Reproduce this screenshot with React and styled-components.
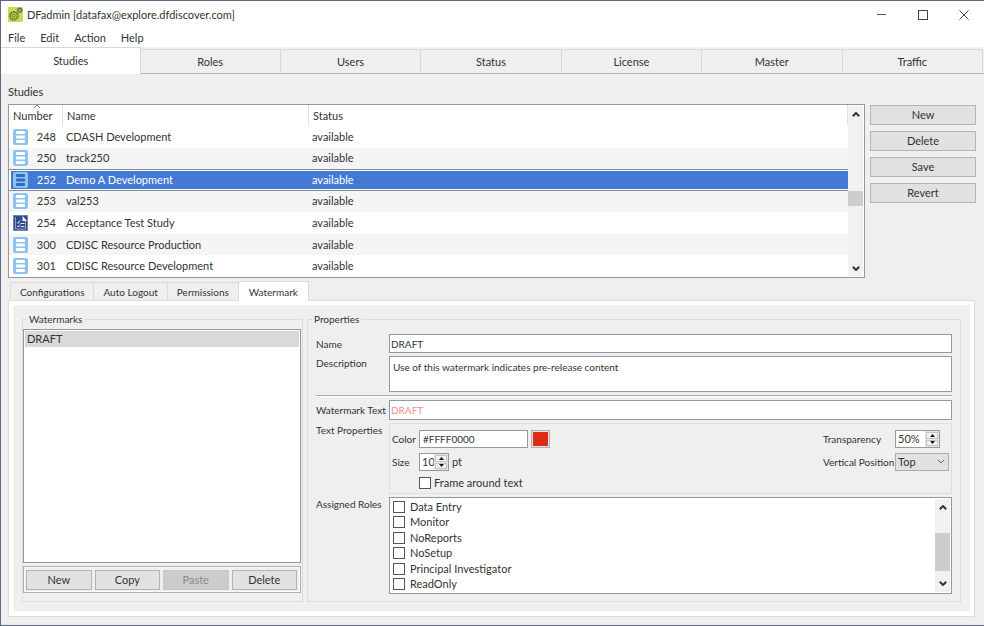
import React, { useState } from "react";

import styled, { createGlobalStyle, css } from "styled-components";

const GlobalStyle = createGlobalStyle`
  * {
    box-sizing: border-box;
  }

  body {
    margin: 0;
    background: #efefef;
  }

  body,
  button,
  input,
  textarea,
  select {
    font-family: Lato, "Open Sans", sans-serif;
    font-size: 11px;
    line-height: 14px;
    color: #333;
  }
`;

const Window = styled.div`
  min-height: 100vh;
  display: flex;
  flex-direction: column;
  border: solid #5c6782;
  border-width: 1px 0 1px 1px;
  background: #efefef;
`;

const TitleBar = styled.header`
  height: 27px;
  display: flex;
  align-items: center;
  padding-left: 7px;
  background: #fff;
`;

const Title = styled.h1`
  flex: 1;
  margin: 0 0 0 4px;
  font-size: 11px;
  font-weight: normal;
`;

const WindowButton = styled.button`
  width: 41px;
  height: 26px;
  padding: 0;
  display: flex;
  align-items: center;
  justify-content: center;
  border: none;
  background: none;
`;

const MenuBar = styled.nav`
  height: 19px;
  display: flex;
  align-items: center;
  gap: 15px;
  padding-left: 7px;
  background: #fff;
`;

const MenuItem = styled.button`
  padding: 0;
  border: none;
  background: none;
`;

const MainTabs = styled.div`
  height: 27px;
  display: flex;
  align-items: flex-end;
  padding: 0 1px;
  border-bottom: 1px solid #b4b4b4;
`;

const MainTab = styled.button`
  flex: 1;
  height: 24px;
  padding: 0;
  border: solid #d9d9d9;
  border-width: 1px 1px 0 0;
  background: #efefef;

  ${({ $active }) =>
    $active &&
    css`
      height: 27px;
      margin: 0 -1px -1px;
      z-index: 1;
      background: #fff;
    `}
`;

const StudiesTitle = styled.h2`
  margin: 11px 0 5px 7px;
  font-size: 11px;
  font-weight: normal;
`;

const StudiesArea = styled.div`
  display: flex;
  align-items: flex-start;
  gap: 5px;
  padding: 0 8px 0 7px;
`;

const TableFrame = styled.div`
  flex: 1;
  height: 174px;
  display: flex;
  border: 1px solid #94989f;
  background: #fff;
`;

const Table = styled.table`
  flex: 1;
  height: 172px;
  table-layout: fixed;
  border-spacing: 0;
`;

const HeadCell = styled.th`
  width: ${({ $width }) => $width};
  height: 21px;
  padding: 0 0 0 4px;
  border-right: 1px solid #e2e2e2;
  text-align: left;
  font-weight: normal;
`;

const SortHead = styled.span`
  position: relative;
  display: block;

  svg {
    position: absolute;
    top: -5px;
    left: 20px;
  }
`;

const Cell = styled.td`
  padding: 0 0 0 3px;
`;

const Row = styled.tr`
  background: ${({ $shaded }) => ($shaded ? "#f5f5f5" : "#fff")};

  ${({ $selected }) =>
    $selected &&
    css`
      background: #4379d3;
      color: #fff;

      ${Cell} {
        box-shadow: inset 0 1px #7f8b93, inset 0 -1px #7f8b93,
          inset 0 2px #fff, inset 0 -2px #fff;
      }

      ${Cell}:first-child {
        box-shadow: inset 0 1px #7f8b93, inset 0 -1px #7f8b93,
          inset 0 2px #fff, inset 0 -2px #fff, inset 2px 0 #fff;
      }
    `}
`;

const NumberCell = styled.div`
  display: flex;
  align-items: center;
  justify-content: space-between;
  padding: 0 7px 0 1px;
`;

const ScrollTrack = styled.div`
  width: 15px;
  display: flex;
  flex-direction: column;
  margin: 1px 1px 1px 0;
  background: #f1f1f1;
`;

const ScrollButton = styled.button`
  height: 16px;
  padding: 0;
  display: flex;
  align-items: center;
  justify-content: center;
  border: none;
  background: none;
`;

const ScrollSpace = styled.div`
  flex: ${({ $grow }) => $grow};
`;

const ScrollThumb = styled.div`
  flex: ${({ $grow }) => $grow};
  background: #cdcdcd;
`;

const PushButton = styled.button`
  height: 20px;
  flex: 1;
  padding: 0;
  border: 1px solid #b4b4b4;
  background: #e1e1e1;

  &:disabled {
    border-color: #c6c6c6;
    background: #cccccc;
    color: #8b8b8b;
  }
`;

const SideButtons = styled.div`
  width: 106px;
  display: grid;
  gap: 6px;
  padding-top: 1px;
`;

const SubTabs = styled.div`
  display: flex;
  align-items: flex-end;
  height: 22px;
  padding: 0 9px;
`;

const SubTab = styled.button`
  height: 18px;
  padding: 0 9px;
  border: solid #dadada;
  border-width: 1px 1px 0 0;
  background: #efefef;
  font-size: 10px;

  &:first-child {
    border-left-width: 1px;
  }

  ${({ $active }) =>
    $active &&
    css`
      height: 20px;
      margin-bottom: -1px;
      padding: 0 10px;
      z-index: 1;
      background: #fff;
    `}
`;

const Pane = styled.main`
  flex: 1;
  display: flex;
  margin: 0 9px 8px 7px;
  border: 1px solid #dcdcdc;
  background: #fff;
  padding: 4px 4px 5px;
`;

const PaneBody = styled.div`
  flex: 1;
  display: flex;
  gap: 4px;
  padding: 7px 9px 9px;
  background: #efefef;
`;

const Group = styled.fieldset`
  flex: ${({ $flex }) => $flex};
  min-width: 0;
  margin: 0;
  padding: 0;
  display: flex;
  flex-direction: column;
  border: 1px solid #dcdcdc;
`;

const Legend = styled.legend`
  margin-left: 4px;
  padding: 0 2px;
  font-size: 10px;
`;

const WatermarkList = styled.ul`
  flex: 1;
  margin: 3px 1px 3px 0;
  padding: 1px;
  border: 1px solid #94989f;
  background: #fff;
  list-style: none;

  li {
    height: 16px;
    padding: 1px 0 0 2px;
    background: #d9d9d9;
  }
`;

const ListButtons = styled.div`
  display: flex;
  gap: 3px;
  margin: 0 1px 8px 0;
  padding: 3px 3px 2px 2px;
  border: 1px solid #b0b0b0;
  box-shadow: inset 0 0 0 1px #fafafa;
`;

const Form = styled.div`
  flex: 1;
  display: grid;
  grid-template-columns: 73px 1fr;
  grid-template-rows: 19px 36px 2px 20px 71px 1fr;
  row-gap: 3px;
  padding: 8px 8px 7px;
`;

const FieldLabel = styled.label`
  white-space: nowrap;
  font-size: 10px;
  align-self: ${({ $center }) => ($center ? "center" : "start")};
`;

const Rule = styled.hr`
  grid-column: 1 / -1;
  width: 100%;
  margin: 0;
  border: solid;
  border-width: 1px 0;
  border-color: #a8a8a8 #fff #fff;
`;

const TextInput = styled.input`
  width: 100%;
  min-width: 0;
  padding: 0 1px;
  border: 1px solid #94989f;
  background: #fff;
  font-size: 10px;
  color: ${({ $color }) => $color};
`;

const TextArea = styled.textarea`
  padding: 3px;
  border: 1px solid #94989f;
  background: #fff;
  font-size: 10px;
  resize: none;
`;

const TextProps = styled.div`
  display: flex;
  justify-content: space-between;
  padding: 6px 2px;
  border: 1px solid #dedede;
`;

const PropColumn = styled.div`
  display: grid;
  grid-template-columns: ${({ $columns }) => $columns};
  grid-template-rows: 18px 18px 14px;
  row-gap: 5px;
  align-items: center;
`;

const Inline = styled.div`
  height: 100%;
  display: flex;
  align-items: center;
  gap: 3px;
`;

const ColorInput = styled(TextInput)`
  width: 109px;
  height: 18px;
  padding: 0 3px;
`;

const Swatch = styled.button`
  width: 19px;
  height: 18px;
  padding: 0;
  border: 1px solid #b0b0b0;
  background: #dd2c16;
  box-shadow: inset 0 0 0 1px #e6e6e6;
`;

const Spin = styled.div`
  width: ${({ $width }) => $width};
  height: 18px;
  display: flex;
  border: 1px solid #94989f;
  background: #fff;

  input {
    flex: 1;
    min-width: 0;
    padding: 0 0 0 2px;
    border: none;
    background: none;
  }
`;

const SpinButtons = styled.div`
  width: 14px;
  display: grid;
  gap: 1px;
  padding: 1px;
  background: #e6e6e6;
`;

const SpinButton = styled.button`
  padding: 0;
  display: flex;
  align-items: center;
  justify-content: center;
  border: 1px solid #c4c4c4;
  background: #f2f2f2;
`;

const SelectBox = styled.div`
  position: relative;

  select {
    display: block;
    width: 100%;
    height: 18px;
    padding: 0 2px;
    appearance: none;
    border: 1px solid #adadad;
    border-radius: 0;
    background: #e1e1e1;
  }

  svg {
    position: absolute;
    top: 6px;
    right: 4px;
    pointer-events: none;
  }
`;

const CheckBox = styled.input`
  width: 12px;
  height: 12px;
  margin: 0;
  appearance: none;
  border: 1px solid #555;
  background: #fff;

  &:checked {
    background: #555;
  }
`;

const CheckLabel = styled.label`
  display: flex;
  align-items: center;
  gap: ${({ $gap }) => $gap};
`;

const Roles = styled.div`
  display: flex;
  border: 1px solid #94989f;
  background: #fff;
`;

const RoleList = styled.div`
  flex: 1;
  display: flex;
  flex-direction: column;
  padding: 1px 3px;

  ${CheckLabel} {
    flex: 1;
  }
`;

const AppIcon = () => (
  <svg width="15" height="15" viewBox="0 0 15 15" fill="none">
    <rect width="15" height="15" rx="1" fill="#c8db50" />
    <circle cx="5.8" cy="8.8" r="4.2" stroke="#5b6840" strokeWidth="1.2" strokeDasharray="1.7 0.6" />
    <circle cx="5.8" cy="8.8" r="3.4" stroke="#5b6840" strokeWidth="0.7" />
    <circle cx="5.8" cy="8.8" r="1.5" stroke="#5b6840" strokeWidth="0.9" />
    <circle cx="11.6" cy="3.3" r="1.8" stroke="#5a6472" strokeWidth="1.3" />
    <circle cx="11.6" cy="3.3" r="2.7" stroke="#5a6472" strokeWidth="0.7" strokeDasharray="1.2 1" />
  </svg>
);

const DatabaseIcon = ({ selected }) => (
  <svg width="15" height="16" viewBox="0 0 15 16">
    <rect width="15" height="16" rx="2" fill="#8cc4ee" />
    {[2, 6.5, 11].map((y) => (
      <rect key={y} x="3" y={y} width="9" height="3" rx="0.8" fill={selected ? "#2f6bc8" : "#fff"} />
    ))}
  </svg>
);

const ReportIcon = () => (
  <svg width="15" height="16" viewBox="0 0 15 16" fill="none">
    <rect x="0.5" y="0.5" width="14" height="15" fill="#2c4a8c" stroke="#7286b4" />
    <path d="M2.500 2v12h10V6" stroke="#8fa1cb" />
    <path d="M9.500 1v5h4.500z" fill="#fff" />
    <path d="M4 7.500l1 1 2-3M4 11l1 1 2-2.500M7.500 8.500h4M7.500 11.500h4" stroke="#dfe6f5" />
  </svg>
);

const Chevron = ({ up, size = 8, color = "#333", width = 2 }) => (
  <svg width={size} height={size / 2 + 1} viewBox="0 0 8 5" fill="none">
    <path d={up ? "M0.800 4.200L4 1l3.200 3.200" : "M0.800 0.800L4 4l3.200-3.200"} stroke={color} strokeWidth={width} />
  </svg>
);

const Triangle = ({ up }) => (
  <svg width="5" height="3" viewBox="0 0 5 3">
    <path d={up ? "M0 3L2.500 0L5 3z" : "M0 0L2.500 3L5 0z"} fill="#111" />
  </svg>
);

const ScrollBar = ({ before, thumb, after }) => (
  <ScrollTrack>
    <ScrollButton aria-label="Scroll up">
      <Chevron up />
    </ScrollButton>
    <ScrollSpace $grow={before} />
    <ScrollThumb $grow={thumb} />
    <ScrollSpace $grow={after} />
    <ScrollButton aria-label="Scroll down">
      <Chevron />
    </ScrollButton>
  </ScrollTrack>
);

const SpinBox = ({ id, value, width }) => (
  <Spin $width={width}>
    <input id={id} defaultValue={value} />
    <SpinButtons>
      <SpinButton aria-label="Increase">
        <Triangle up />
      </SpinButton>
      <SpinButton aria-label="Decrease">
        <Triangle />
      </SpinButton>
    </SpinButtons>
  </Spin>
);

const mainTabs = ["Studies", "Roles", "Users", "Status", "License", "Master", "Traffic"];

const subTabs = ["Configurations", "Auto Logout", "Permissions", "Watermark"];

const studies = [
  { number: 248, name: "CDASH Development" },
  { number: 250, name: "track250" },
  { number: 252, name: "Demo A Development" },
  { number: 253, name: "val253" },
  { number: 254, name: "Acceptance Test Study", report: true },
  { number: 300, name: "CDISC Resource Production" },
  { number: 301, name: "CDISC Resource Development" },
];

const roles = [
  "Data Entry",
  "Monitor",
  "NoReports",
  "NoSetup",
  "Principal Investigator",
  "ReadOnly",
];

const App = () => {
  const [mainTab, setMainTab] = useState("Studies");
  const [subTab, setSubTab] = useState("Watermark");
  const [selected, setSelected] = useState(252);

  return (
    <Window>
      <GlobalStyle />
      <TitleBar>
        <AppIcon />
        <Title>DFadmin [datafax@explore.dfdiscover.com]</Title>
        <WindowButton aria-label="Minimize">
          <svg width="10" height="10" viewBox="0 0 10 10">
            <path d="M0 4.500h9" stroke="#555" />
          </svg>
        </WindowButton>
        <WindowButton aria-label="Maximize">
          <svg width="10" height="10" viewBox="0 0 10 10">
            <rect x="0.5" y="0.5" width="9" height="9" fill="none" stroke="#444" />
          </svg>
        </WindowButton>
        <WindowButton aria-label="Close">
          <svg width="10" height="10" viewBox="0 0 10 10">
            <path d="M0.500 0.500l9 9M9.500 0.500l-9 9" stroke="#444" />
          </svg>
        </WindowButton>
      </TitleBar>
      <MenuBar>
        <MenuItem>File</MenuItem>
        <MenuItem>Edit</MenuItem>
        <MenuItem>Action</MenuItem>
        <MenuItem>Help</MenuItem>
      </MenuBar>
      <MainTabs>
        {mainTabs.map((tab) => (
          <MainTab key={tab} $active={tab === mainTab} onClick={() => setMainTab(tab)}>
            {tab}
          </MainTab>
        ))}
      </MainTabs>

      <StudiesTitle>Studies</StudiesTitle>
      <StudiesArea>
        <TableFrame>
          <Table>
            <thead>
              <tr>
                <HeadCell $width="54px">
                  <SortHead>
                    Number
                    <Chevron up color="#777" width={1} />
                  </SortHead>
                </HeadCell>
                <HeadCell $width="246px">Name</HeadCell>
                <HeadCell>Status</HeadCell>
              </tr>
            </thead>
            <tbody>
              {studies.map(({ number, name, report }, index) => (
                <Row
                  key={number}
                  $shaded={index % 2 === 1}
                  $selected={number === selected}
                  onClick={() => setSelected(number)}
                >
                  <Cell>
                    <NumberCell>
                      {report ? <ReportIcon /> : <DatabaseIcon selected={number === selected} />}
                      {number}
                    </NumberCell>
                  </Cell>
                  <Cell>{name}</Cell>
                  <Cell>available</Cell>
                </Row>
              ))}
            </tbody>
          </Table>
          <ScrollBar before={69} thumb={16} after={54} />
        </TableFrame>
        <SideButtons>
          <PushButton>New</PushButton>
          <PushButton>Delete</PushButton>
          <PushButton>Save</PushButton>
          <PushButton>Revert</PushButton>
        </SideButtons>
      </StudiesArea>

      <SubTabs>
        {subTabs.map((tab) => (
          <SubTab key={tab} $active={tab === subTab} onClick={() => setSubTab(tab)}>
            {tab}
          </SubTab>
        ))}
      </SubTabs>
      <Pane>
        <PaneBody>
          <Group $flex="0 0 281px">
            <Legend>Watermarks</Legend>
            <WatermarkList>
              <li>DRAFT</li>
            </WatermarkList>
            <ListButtons>
              <PushButton>New</PushButton>
              <PushButton>Copy</PushButton>
              <PushButton disabled>Paste</PushButton>
              <PushButton>Delete</PushButton>
            </ListButtons>
          </Group>

          <Group $flex="1">
            <Legend>Properties</Legend>
            <Form>
              <FieldLabel htmlFor="name" $center>
                Name
              </FieldLabel>
              <TextInput id="name" defaultValue="DRAFT" />
              <FieldLabel htmlFor="description">Description</FieldLabel>
              <TextArea
                id="description"
                defaultValue="Use of this watermark indicates pre-release content"
              />
              <Rule />
              <FieldLabel htmlFor="text" $center>
                Watermark Text
              </FieldLabel>
              <TextInput id="text" $color="#ee8f8f" defaultValue="DRAFT" />
              <FieldLabel as="span">Text Properties</FieldLabel>
              <TextProps>
                <PropColumn $columns="27px auto">
                  <FieldLabel htmlFor="color" $center>
                    Color
                  </FieldLabel>
                  <Inline>
                    <ColorInput id="color" defaultValue="#FFFF0000" />
                    <Swatch aria-label="Pick color" />
                  </Inline>
                  <FieldLabel htmlFor="size" $center>
                    Size
                  </FieldLabel>
                  <Inline>
                    <SpinBox id="size" value="10" width="30px" />
                    pt
                  </Inline>
                  <span />
                  <CheckLabel $gap="3px">
                    <CheckBox type="checkbox" />
                    Frame around text
                  </CheckLabel>
                </PropColumn>
                <PropColumn $columns="72px 54px">
                  <FieldLabel htmlFor="transparency" $center>
                    Transparency
                  </FieldLabel>
                  <SpinBox id="transparency" value="50%" width="45px" />
                  <FieldLabel htmlFor="position" $center>
                    Vertical Position
                  </FieldLabel>
                  <SelectBox>
                    <select id="position" defaultValue="Top">
                      <option>Top</option>
                      <option>Middle</option>
                      <option>Bottom</option>
                    </select>
                    <Chevron color="#666" width={1} />
                  </SelectBox>
                </PropColumn>
              </TextProps>
              <FieldLabel as="span">Assigned Roles</FieldLabel>
              <Roles>
                <RoleList>
                  {roles.map((role) => (
                    <CheckLabel key={role} $gap="5px">
                      <CheckBox type="checkbox" />
                      {role}
                    </CheckLabel>
                  ))}
                </RoleList>
                <ScrollBar before={18} thumb={37} after={5} />
              </Roles>
            </Form>
          </Group>
        </PaneBody>
      </Pane>
    </Window>
  );
};

export default App;
